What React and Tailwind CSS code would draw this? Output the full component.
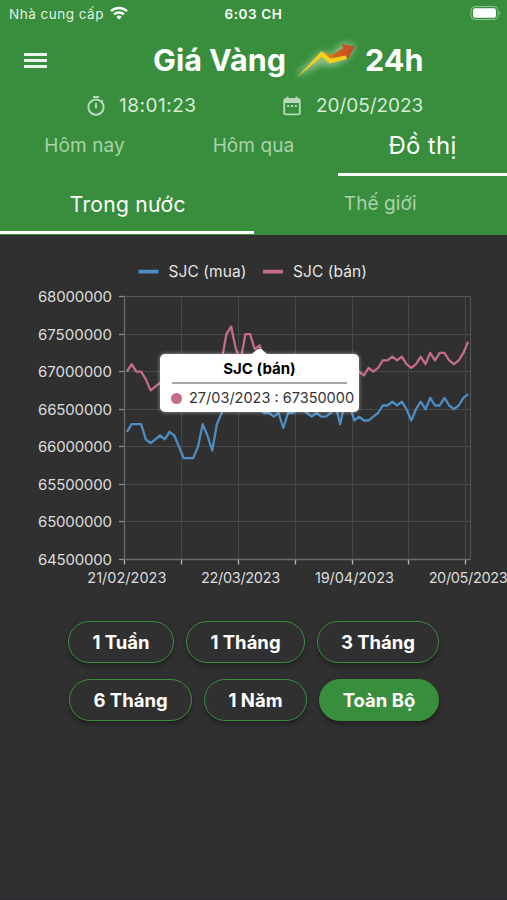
import clsx from 'clsx'

const mua = [
  66.2, 66.3, 66.3, 66.3, 66.1, 66.05, 66.1, 66.15, 66.1, 66.2, 66.15, 66, 65.85, 65.85, 65.85, 66, 66.3, 66.15, 65.95,
  66.3, 66.45, 66.6, 66.65, 66.6, 66.55, 66.6, 66.6, 66.5, 66.5, 66.45, 66.45, 66.4, 66.45, 66.25, 66.45, 66.45, 66.5,
  66.5, 66.45, 66.4, 66.45, 66.4, 66.4, 66.45, 66.55, 66.3, 66.6, 66.55, 66.35, 66.4, 66.35, 66.35, 66.4, 66.45, 66.55,
  66.55, 66.6, 66.55, 66.6, 66.5, 66.35, 66.5, 66.6, 66.5, 66.65, 66.55, 66.55, 66.65, 66.55, 66.5, 66.55, 66.65, 66.7,
]

const ban = [
  67, 67.1, 67, 67, 66.9, 66.75, 66.8, 66.85, 66.8, 66.85, 66.85, 66.75, 66.6, 66.6, 66.6, 66.7, 66.95, 66.8, 66.7, 66.9,
  67.15, 67.5, 67.6, 67.3, 67.15, 67.5, 67.5, 67.3, 67.35, 67.15, 67.1, 67.05, 67.1, 66.95, 67.05, 67.05, 67.1, 67.1,
  67.05, 67, 67.05, 67, 67, 67.05, 67.1, 66.95, 67.1, 67.1, 67, 67, 66.95, 67.05, 67, 67.05, 67.15, 67.15, 67.2, 67.15,
  67.2, 67.1, 67.05, 67.1, 67.2, 67.1, 67.25, 67.15, 67.25, 67.25, 67.15, 67.1, 67.15, 67.25, 67.4,
]

const LEFT = 124.5
const RIGHT = 470.5
const TOP = 61.5
const BOTTOM = 324.5
const BAND = (RIGHT - LEFT) / mua.length

const yTicks = [68000000, 67500000, 67000000, 66500000, 66000000, 65500000, 65000000, 64500000]
const xTicks = [0, 12, 24, 36, 48, 60, 72]
const xLabels = [
  { index: 0, text: '21/02/2023' },
  { index: 24, text: '22/03/2023' },
  { index: 48, text: '19/04/2023' },
  { index: 72, text: '20/05/2023' },
]

const getX = (index) => LEFT + BAND * (index + 0.5)
const getY = (value) => TOP + ((68 - value) / 3.5) * (BOTTOM - TOP)
const getTickX = (index) => Math.floor(LEFT + BAND * index) + 0.5
const toPoints = (values) => values.map((value, i) => `${getX(i).toFixed(1)},${getY(value).toFixed(1)}`).join(' ')

function StatusBar() {
  return (
    <div className="grid h-7 grid-cols-3 items-center text-[13.5px] text-white">
      <div className="flex items-center gap-1.5 pl-[9px] text-[#e2f0e2]">
        <span className="tracking-[0.5px] whitespace-nowrap">Nhà cung cấp</span>
        <svg className="-mt-0.5 h-[14px] w-[18px]" viewBox="0 0 18 14" fill="none" stroke="#fff" strokeWidth="2.5">
          <path d="M1 5.2a11.4 11.4 0 0 1 16 0" />
          <path d="M4 8.4a7.2 7.2 0 0 1 10 0" />
          <path d="M9 13.6 6.3 10.9a3.9 3.9 0 0 1 5.4 0z" fill="#fff" stroke="none" />
        </svg>
      </div>
      <div className="text-center font-semibold tracking-[0.6px]">6:03 CH</div>
      <div className="flex justify-end pr-[6px]">
        <svg className="-mt-0.5 h-[14px] w-[31px]" viewBox="0 0 31 14">
          <rect x="1" y="0.5" width="27" height="13" rx="4" fill="none" stroke="#8fc292" />
          <rect x="3" y="2.3" width="23" height="9.4" rx="2.2" fill="#fff" />
          <path d="M29.3 5v4.2c1.4-.6 1.4-3.6 0-4.2z" fill="#8fc292" />
        </svg>
      </div>
    </div>
  )
}

function TrendLogo() {
  return (
    <svg className="h-[44px] w-[66px]" viewBox="0 0 66 44">
      <defs>
        <linearGradient id="arrow" x1="0" y1="0" x2="1" y2="0">
          <stop offset="0" stopColor="#e0a01c" />
          <stop offset="0.4" stopColor="#c9691d" />
          <stop offset="1" stopColor="#c8441f" />
        </linearGradient>
        <filter id="glow" x="-30%" y="-40%" width="160%" height="180%">
          <feGaussianBlur stdDeviation="3.2" />
        </filter>
      </defs>
      <path d="M6 36 29 15 38 19 50 7 60 9 53 20 40 26 27 25z" fill="#d5e8c8" stroke="#d5e8c8" strokeWidth="4" opacity="0.55" filter="url(#glow)" />
      <path d="M29 14 38 17 50.5 10 48.5 6 61.5 8.5 55 21 52 18 38.5 24z" fill="url(#arrow)" />
      <path d="M4 39.5 28.5 13 37.5 20.5 53 17.5 54 21 36.5 25.5 28.8 18.8z" fill="#f3cf1e" />
    </svg>
  )
}

function InfoRow() {
  return (
    <div className="flex h-[26px] items-center pt-[2px] text-[19px] text-[#d7ebd8]">
      <div className="flex w-[197px] items-center gap-[13px] pl-[86px]">
        <svg className="h-5 w-5 shrink-0" viewBox="0 0 20 20" fill="none" stroke="#b7dab9" strokeWidth="2">
          <circle cx="10" cy="11.2" r="7.6" />
          <path d="M7 1h6M10 7v5.2M15.4 5.6l1.4-1.4" />
        </svg>
        <span className="tracking-[0.5px]">18:01:23</span>
      </div>
      <div className="flex items-center gap-[15px] pl-[86px]">
        <svg className="h-5 w-[18px] shrink-0" viewBox="0 0 18 20" fill="none" stroke="#b7dab9" strokeWidth="1.8">
          <rect x="1.2" y="3" width="15.6" height="15.4" rx="1.5" />
          <path d="M1 5h16" strokeWidth="4" />
          <path d="M4.5 0.6v3M13.5 0.6v3" />
          <path d="M4.2 10h2M8 10h2M11.8 10h2" strokeWidth="2" />
        </svg>
        <span className="tracking-[-0.05px]">20/05/2023</span>
      </div>
    </div>
  )
}

function Tab({ label, active, className }) {
  return (
    <div
      className={clsx(
        'flex items-center justify-center border-b-[3px]',
        active ? 'border-white tracking-[0.3px] text-white' : 'border-transparent pt-[2px] text-[19px] tracking-[0.1px] text-[#a9d3ab]',
        className,
      )}
    >
      {label}
    </div>
  )
}

function PriceChart() {
  return (
    <svg className="block h-[365px] w-[507px]" viewBox="0 0 507 365">
      <g fill="#e4e4e4" fontSize="15.5">
        <rect x="138.5" y="34.8" width="20" height="3.8" rx="0.5" fill="#4d8dc4" />
        <text x="168.5" y="42" textLength="78">SJC (mua)</text>
        <rect x="263" y="34.8" width="20" height="3.8" rx="0.5" fill="#c46c88" />
        <text x="293" y="42" textLength="74">SJC (bán)</text>
      </g>
      {yTicks.map((tick) => {
        const y = Math.floor(getY(tick / 1000000)) + 0.5
        return (
          <g key={tick}>
            <path d={`M${LEFT} ${y}H${RIGHT}`} stroke="#474a4d" />
            <path d={`M119 ${y}h5.5`} stroke="#8d8d8d" strokeWidth="1.3" />
            <text x="112" y={y + 5.5} textAnchor="end" fill="#dcdcdc" fontSize="15" textLength="74">{tick}</text>
          </g>
        )
      })}
      {xTicks.map((index) => (
        <g key={index}>
          <path d={`M${getTickX(index)} ${TOP}V${BOTTOM}`} stroke="#46494b" />
          <path d={`M${getTickX(index)} ${BOTTOM}v5`} stroke="#b5b5b5" strokeWidth="1.3" />
        </g>
      ))}
      <path d={`M${LEFT} ${TOP}H${RIGHT}V${BOTTOM}`} fill="none" stroke="#55585a" />
      <path d={`M${LEFT} ${TOP}V${BOTTOM}H${RIGHT}`} fill="none" stroke="#6b6b6b" strokeWidth="1.3" />
      {xLabels.map(({ index, text }) => (
        <text key={text} x={getX(index)} y="347.5" textAnchor="middle" fill="#dcdcdc" fontSize="14.5" textLength="79">{text}</text>
      ))}
      <g fill="none" strokeWidth="2.3" strokeLinejoin="round">
        <polyline points={toPoints(mua)} stroke="#4d8dc4" />
        <polyline points={toPoints(ban)} stroke="#c46c88" />
      </g>
    </svg>
  )
}

function ChartTooltip() {
  return (
    <div className="absolute top-[119px] left-[160px] h-[58px] w-[199px] rounded-[5px] bg-white text-black shadow-[0_0_4px_rgba(255,255,255,0.5)]">
      <svg className="absolute -top-[6px] left-[89px] h-[7px] w-5" viewBox="0 0 20 7">
        <path d="M1.5 7 8 1.6Q10.5 0 13 1.6L19 7z" fill="#fff" />
      </svg>
      <div className="pt-[5px] text-center text-[15px] leading-5 font-bold">SJC (bán)</div>
      <div className="mx-3 mt-[3px] h-[2px] bg-[#a5a5a5]" />
      <div className="mt-[4px] flex items-center gap-[7px] pl-[11px] text-[14.5px] leading-5 whitespace-nowrap text-[#333]">
        <span className="h-[11px] w-[11px] shrink-0 rounded-full bg-[#c46c88]" />
        <span>27/03/2023 : 67350000</span>
      </div>
    </div>
  )
}

function RangeButton({ label, active, className }) {
  return (
    <button
      className={clsx(
        'h-[42px] rounded-full border-[1.5px] border-[#388e3c] pt-[2px] text-[18.5px] font-bold whitespace-nowrap text-white shadow-[0_3px_5px_rgba(0,0,0,0.35)]',
        active ? 'bg-[#388e3c]' : 'bg-[#303030]',
        className,
      )}
    >
      {label}
    </button>
  )
}

export default function App() {
  return (
    <div className="flex h-[900px] w-[507px] flex-col overflow-hidden border-b border-[#2f272e] bg-[#303030] font-['Inter','Liberation_Sans',sans-serif]">
      <header className="h-[235px] shrink-0 bg-[#388e3c]">
        <StatusBar />
        <div className="flex h-16 items-center pl-6">
          <div className="flex w-[23px] flex-col gap-[3px]">
            <span className="h-[3px] bg-[#e9f4e9]" />
            <span className="h-[3px] bg-[#e9f4e9]" />
            <span className="h-[3px] bg-[#e9f4e9]" />
          </div>
          <h1 className="flex items-center pl-[106px] text-[30.5px] font-bold whitespace-nowrap text-white">
            <span>Giá Vàng</span>
            <span className="mr-[6px] ml-[7px]"><TrendLogo /></span>
            <span>24h</span>
          </h1>
        </div>
        <InfoRow />
        <nav className="grid h-[58px] grid-cols-3">
          <Tab label="Hôm nay" />
          <Tab label="Hôm qua" />
          <Tab label="Đồ thị" active className="text-[24px]" />
        </nav>
        <nav className="grid h-[58px] grid-cols-2">
          <Tab label="Trong nước" active className="pt-[2px] pl-[2px] text-[21px]" />
          <Tab label="Thế giới" />
        </nav>
      </header>
      <section className="relative">
        <PriceChart />
        <ChartTooltip />
      </section>
      <section className="flex flex-col gap-4 pt-[21px]">
        <div className="flex gap-3 pl-[68px]">
          <RangeButton label="1 Tuần" className="w-[106px]" />
          <RangeButton label="1 Tháng" className="w-[119px]" />
          <RangeButton label="3 Tháng" className="w-[122px]" />
        </div>
        <div className="flex gap-3 pl-[69px]">
          <RangeButton label="6 Tháng" className="w-[123px]" />
          <RangeButton label="1 Năm" className="w-[103px]" />
          <RangeButton label="Toàn Bộ" active className="w-[120px]" />
        </div>
      </section>
    </div>
  )
}
